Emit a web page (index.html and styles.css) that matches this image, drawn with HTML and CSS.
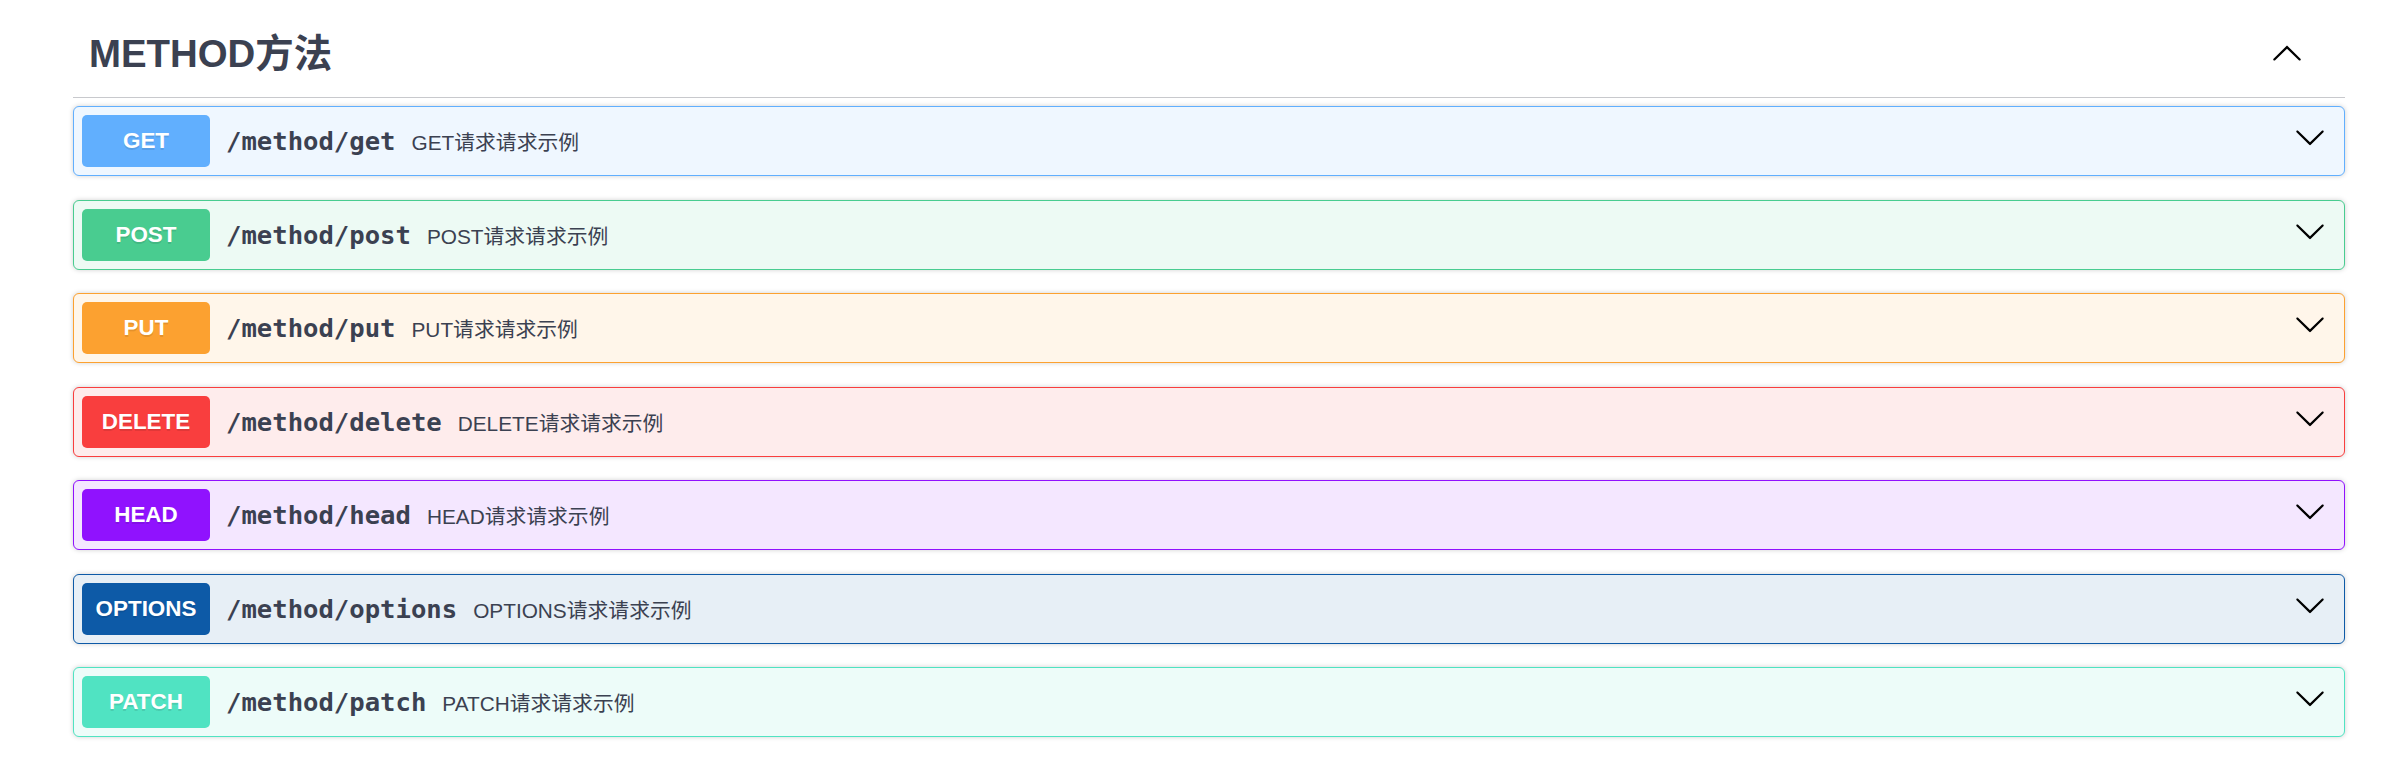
FILE: index.html
```html
<!DOCTYPE html>
<html lang="zh">
<head>
<meta charset="utf-8">
<title>METHOD方法</title>
<link rel="stylesheet" href="styles.css">
</head>
<body>
<div class="wrapper">
  <section class="tag-section">
    <h3 class="tag-header">
      <span class="tag-title">METHOD方法</span>
      <svg class="arrow arrow-up" viewBox="0 0 20 20" width="32" height="32"><path d="M17.418 6.109c.272-.268.709-.268.979 0s.271.701 0 .969l-7.908 7.83c-.27.268-.707.268-.979 0l-7.908-7.83c-.27-.268-.27-.701 0-.969.271-.268.709-.268.979 0L10 13.25l7.418-7.141z"/></svg>
    </h3>

    <div class="opblock op-get">
      <span class="method">GET</span>
      <span class="path">/method/get</span>
      <span class="desc">GET请求请求示例</span>
      <svg class="arrow" viewBox="0 0 20 20" width="32" height="32"><path d="M17.418 6.109c.272-.268.709-.268.979 0s.271.701 0 .969l-7.908 7.83c-.27.268-.707.268-.979 0l-7.908-7.83c-.27-.268-.27-.701 0-.969.271-.268.709-.268.979 0L10 13.25l7.418-7.141z"/></svg>
    </div>

    <div class="opblock op-post">
      <span class="method">POST</span>
      <span class="path">/method/post</span>
      <span class="desc">POST请求请求示例</span>
      <svg class="arrow" viewBox="0 0 20 20" width="32" height="32"><path d="M17.418 6.109c.272-.268.709-.268.979 0s.271.701 0 .969l-7.908 7.83c-.27.268-.707.268-.979 0l-7.908-7.83c-.27-.268-.27-.701 0-.969.271-.268.709-.268.979 0L10 13.25l7.418-7.141z"/></svg>
    </div>

    <div class="opblock op-put">
      <span class="method">PUT</span>
      <span class="path">/method/put</span>
      <span class="desc">PUT请求请求示例</span>
      <svg class="arrow" viewBox="0 0 20 20" width="32" height="32"><path d="M17.418 6.109c.272-.268.709-.268.979 0s.271.701 0 .969l-7.908 7.83c-.27.268-.707.268-.979 0l-7.908-7.830c-.27-.268-.27-.701 0-.969.271-.268.709-.268.979 0L10 13.25l7.418-7.141z"/></svg>
    </div>

    <div class="opblock op-delete">
      <span class="method">DELETE</span>
      <span class="path">/method/delete</span>
      <span class="desc">DELETE请求请求示例</span>
      <svg class="arrow" viewBox="0 0 20 20" width="32" height="32"><path d="M17.418 6.109c.272-.268.709-.268.979 0s.271.701 0 .969l-7.908 7.83c-.27.268-.707.268-.979 0l-7.908-7.83c-.27-.268-.27-.701 0-.969.271-.268.709-.268.979 0L10 13.25l7.418-7.141z"/></svg>
    </div>

    <div class="opblock op-head">
      <span class="method">HEAD</span>
      <span class="path">/method/head</span>
      <span class="desc">HEAD请求请求示例</span>
      <svg class="arrow" viewBox="0 0 20 20" width="32" height="32"><path d="M17.418 6.109c.272-.268.709-.268.979 0s.271.701 0 .969l-7.908 7.83c-.27.268-.707.268-.979 0l-7.908-7.83c-.27-.268-.27-.701 0-.969.271-.268.709-.268.979 0L10 13.25l7.418-7.141z"/></svg>
    </div>

    <div class="opblock op-options">
      <span class="method">OPTIONS</span>
      <span class="path">/method/options</span>
      <span class="desc">OPTIONS请求请求示例</span>
      <svg class="arrow" viewBox="0 0 20 20" width="32" height="32"><path d="M17.418 6.109c.272-.268.709-.268.979 0s.271.701 0 .969l-7.908 7.83c-.27.268-.707.268-.979 0l-7.908-7.83c-.27-.268-.27-.701 0-.969.271-.268.709-.268.979 0L10 13.25l7.418-7.141z"/></svg>
    </div>

    <div class="opblock op-patch">
      <span class="method">PATCH</span>
      <span class="path">/method/patch</span>
      <span class="desc">PATCH请求请求示例</span>
      <svg class="arrow" viewBox="0 0 20 20" width="32" height="32"><path d="M17.418 6.109c.272-.268.709-.268.979 0s.271.701 0 .969l-7.908 7.83c-.27.268-.707.268-.979 0l-7.908-7.83c-.27-.268-.27-.701 0-.969.271-.268.709-.268.979 0L10 13.25l7.418-7.141z"/></svg>
    </div>
  </section>
</div>
</body>
</html>
```

FILE: styles.css
```css
html, body {
  margin: 0;
  padding: 0;
  background: #ffffff;
}

body {
  font-family: "Liberation Sans", "Noto Sans CJK SC", sans-serif;
  color: #3b4151;
}

.wrapper {
  padding: 0 49px 0 73px;
}

.tag-section {
  display: flex;
  flex-direction: column;
}

.tag-header {
  margin: 0 0 8px 0;
  padding: 32px 42px 21px 16px;
  display: flex;
  align-items: center;
  justify-content: space-between;
  border-bottom: 1px solid #c8c9cd;
}

.tag-title {
  font-family: "Liberation Sans", "Noto Sans CJK SC", sans-serif;
  font-size: 38.4px;
  font-weight: 700;
  line-height: 44px;
  color: #3b4151;
}

.arrow {
  flex: none;
  fill: #000000;
  display: block;
}

.arrow-up {
  transform: rotate(180deg);
}

.opblock {
  display: flex;
  align-items: center;
  padding: 8px 18px 8px 8px;
  margin-bottom: 23.5px;
  border: 1px solid #000;
  border-radius: 6px;
  box-shadow: 0 0 5px rgba(0, 0, 0, 0.19);
}

.opblock .arrow {
  margin-left: auto;
  margin-bottom: 8px;
}

.method {
  flex: none;
  box-sizing: border-box;
  min-width: 128px;
  height: 52px;
  padding: 0 6px;
  display: flex;
  align-items: center;
  justify-content: center;
  border-radius: 5px;
  font-family: "Liberation Sans", sans-serif;
  font-size: 22.4px;
  font-weight: 700;
  color: #ffffff;
  text-shadow: 0 1.6px 0 rgba(0, 0, 0, 0.1);
}

.path {
  padding: 0 16px;
  font-family: "DejaVu Sans Mono", monospace;
  font-size: 25.6px;
  font-weight: 700;
  color: #3b4151;
}

.desc {
  font-family: "Liberation Sans", "Noto Sans CJK SC", sans-serif;
  font-size: 20.8px;
  color: #3b4151;
}

.op-get { border-color: #61affe; background: #eff7ff; }
.op-get .method { background: #61affe; }

.op-post { border-color: #49cc90; background: #edfaf4; }
.op-post .method { background: #49cc90; }

.op-put { border-color: #fca130; background: #fff6ea; }
.op-put .method { background: #fca130; }

.op-delete { border-color: #f93e3e; background: #feecec; }
.op-delete .method { background: #f93e3e; }

.op-head { border-color: #9012fe; background: #f4e7ff; }
.op-head .method { background: #9012fe; }

.op-options { border-color: #0d5aa7; background: #e7eff6; }
.op-options .method { background: #0d5aa7; }

.op-patch { border-color: #50e3c2; background: #edfcf9; }
.op-patch .method { background: #50e3c2; }
```
